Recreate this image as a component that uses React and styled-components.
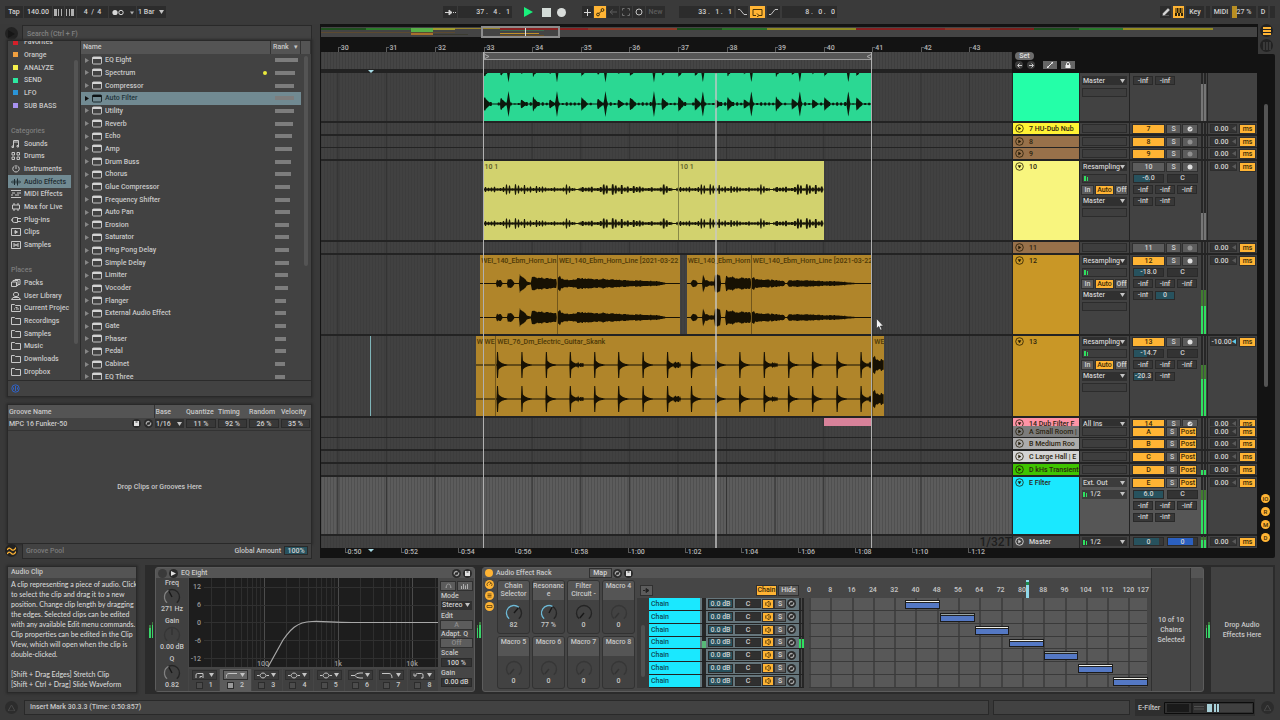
import React from 'react';
import styled, { createGlobalStyle } from 'styled-components';

const GlobalStyle = createGlobalStyle`
  * {
    box-sizing: border-box;
  }
  body {
    margin: 0;
    background: #393939;
    color: #c8c8c8;
    font-family: Roboto, "Liberation Sans", sans-serif;
    font-size: 7px;
    font-weight: 500;
    line-height: 10px;
  }
  button, input, select {
    font: inherit;
    color: inherit;
    margin: 0;
    padding: 0;
    border: 0;
    border-radius: 0;
    background: none;
  }
  svg {
    display: block;
  }
`;

const ORANGE = '#ffb434';
const FIRST_BAR = 29.654;
const BAR_SPAN = 14.221;

const barPos = (bar) => `${((bar - FIRST_BAR) / BAR_SPAN) * 100}%`;
const barWidth = (bars) => `${(bars / BAR_SPAN) * 100}%`;

/* ---------- page ---------- */

const Page = styled.div`
  display: grid;
  grid-template-rows: 24px minmax(534px, 1fr) 137px 25px;
  grid-template-columns: minmax(0, 1fr);
  min-height: 100vh;
`;

const Main = styled.main`
  display: grid;
  grid-template-columns: 311px minmax(0, 1fr) 17px;
  padding-right: 5px;
`;

/* ---------- transport ---------- */

const TransportBar = styled.header`
  display: grid;
  grid-template-columns: 1fr auto 1fr;
  align-items: center;
  padding: 0 5px;
  background: #3a3a3a;
`;

const Cluster = styled.div`
  display: flex;
  align-items: center;
  justify-content: ${(props) => props.$end ? 'flex-end' : 'flex-start'};
  gap: ${(props) => props.$gap || 2}px;
`;

const BarButton = styled.button`
  display: flex;
  align-items: center;
  justify-content: center;
  gap: 3px;
  width: ${(props) => props.$w}px;
  height: 12px;
  background: ${(props) => props.$on ? ORANGE : props.$bare ? 'transparent' : '#2c2c2c'};
  color: ${(props) => props.$on ? '#222' : props.$dim ? '#5c5c5c' : '#d0d0d0'};
`;

const BarField = styled.input`
  width: ${(props) => props.$w}px;
  height: 12px;
  background: #2c2c2c;
  color: #d0d0d0;
  text-align: ${(props) => props.$align || 'center'};
  padding: 0 2px;
`;

const LoadField = styled.output`
  display: flex;
  align-items: center;
  justify-content: center;
  width: 24px;
  height: 12px;
  background: linear-gradient(90deg, #b98f22 5px, #2c2c2c 5px);
`;

const SelectWrap = styled.span`
  position: relative;
  display: block;
  width: ${(props) => props.$w ? `${props.$w}px` : '100%'};
  height: ${(props) => props.$h || 9}px;
  background: ${(props) => props.$bg || '#303030'};

  select {
    display: block;
    width: 100%;
    height: 100%;
    padding: 0 6px 0 ${(props) => props.$ticks ? 8 : 1}px;
    appearance: none;
    line-height: 8px;
    color: #d0d0d0;
  }
  svg {
    position: absolute;
    right: 2px;
    top: calc(50% - 2px);
    pointer-events: none;
  }
  svg + svg {
    right: auto;
    left: 1px;
  }
`;

const LevelTicks = () => (
  <svg width="5" height="5"><path d="M0 0h2v5H0zM3 1h1v4H3z" fill="#2fe060" /></svg>
);

const Select = ({ label, value, w, h, bg, ticks }) => (
  <SelectWrap $w={w} $h={h} $bg={bg} $ticks={ticks}>
    <select aria-label={label} defaultValue={value}>
      <option>{value}</option>
    </select>
    <svg width="5" height="4"><path d="M0 0h5L2.5 4z" fill="#c4c4c4" /></svg>
    {ticks && <LevelTicks />}
  </SelectWrap>
);

const Transport = () => (
  <TransportBar>
    <Cluster $gap={1}>
      <BarButton $w={18}>Tap</BarButton>
      <BarField $w={28} aria-label="Tempo" defaultValue="140.00" />
      <BarButton $w={11} aria-label="Nudge down">
        <svg width="9" height="7" fill="#b0b0b0"><path d="M0 0h3v7H0zM4 0h1v7H4zM7 0h1v7H7z" /></svg>
      </BarButton>
      <BarButton $w={11} aria-label="Nudge up">
        <svg width="9" height="7" fill="#b0b0b0"><path d="M0 0h1v7H0zM3 0h1v7H3zM5 0h3v7H5z" /></svg>
      </BarButton>
      <BarField $w={31} aria-label="Time signature" defaultValue="4  /  4" />
      <BarButton $w={27} aria-label="Metronome">
        <svg width="22" height="7">
          <circle cx="3" cy="3.5" r="2.6" fill="#d8d8d8" />
          <circle cx="9" cy="3.5" r="2.2" fill="none" stroke="#d8d8d8" />
          <path d="M18 2.5h4l-2 3z" fill="#b0b0b0" />
        </svg>
      </BarButton>
      <Select label="Quantization" value="1 Bar" w={29} h={12} bg="#2c2c2c" />
    </Cluster>
    <Cluster $gap={14}>
      <Cluster $gap={6}>
        <Cluster $gap={1}>
          <BarButton $w={14} aria-label="Follow">
            <svg width="11" height="7"><path d="M0 3.5h7M4 1l3 2.5L4 6zM8 3.5h1M10 3.5h1" stroke="#d0d0d0" fill="#d0d0d0" /></svg>
          </BarButton>
          <BarField $w={54} $align="right" aria-label="Arrangement position" defaultValue="37 .   4 .   1" />
        </Cluster>
        <Cluster>
          <BarButton $w={20} $bare aria-label="Play">
            <svg width="9" height="10"><path d="M0 0l9 5-9 5z" fill="#19f07c" /></svg>
          </BarButton>
          <BarButton $w={12} $bare aria-label="Stop">
            <svg width="9" height="9"><path d="M0 0h9v9H0z" fill="#d4dcd8" /></svg>
          </BarButton>
          <BarButton $w={14} $bare aria-label="Record">
            <svg width="9" height="9"><circle cx="4.5" cy="4.5" r="4.5" fill="#d8dcda" /></svg>
          </BarButton>
        </Cluster>
      </Cluster>
      <Cluster $gap={1}>
        <BarButton $w={11} aria-label="Overdub">
          <svg width="7" height="7"><path d="M3.5 0v7M0 3.5h7" stroke="#d8d8d8" /></svg>
        </BarButton>
        <BarButton $w={12} $on aria-label="Automation arm">
          <svg width="9" height="9" fill="none" stroke="#3a2c0c">
            <circle cx="2" cy="6.5" r="1.4" /><circle cx="6.5" cy="2" r="1.4" /><path d="M3 5.5L5.5 3" />
          </svg>
        </BarButton>
        <BarButton $w={12} aria-label="Re-enable automation">
          <svg width="8" height="6"><path d="M8 3H2M4 .5L1 3l3 2.5" stroke="#5c5c5c" fill="none" /></svg>
        </BarButton>
        <BarButton $w={12} aria-label="Capture">
          <svg width="8" height="8"><path d="M.5 2.5V.5h2M5.5.5h2v2M7.5 5.5v2h-2M2.5 7.5H.5v-2" stroke="#707070" fill="none" /></svg>
        </BarButton>
        <BarButton $w={12} aria-label="Session record">
          <svg width="8" height="8"><circle cx="4" cy="4" r="3" fill="none" stroke="#c4c4c4" /></svg>
        </BarButton>
        <BarButton $w={19} $dim>New</BarButton>
      </Cluster>
      <Cluster>
        <BarField $w={55} $align="right" aria-label="Loop start" defaultValue="33 .   1 .   1" />
        <BarButton $w={12} aria-label="Punch in">
          <svg width="9" height="6"><path d="M0 .5h2l4 5h3" stroke="#c4c4c4" fill="none" /></svg>
        </BarButton>
        <BarButton $w={15} $on aria-label="Loop">
          <svg width="11" height="9"><path d="M4 7.5H1v-6h9v6H7M5 5.5L7 7.5 5 9" stroke="#4a3406" fill="none" /></svg>
        </BarButton>
        <BarButton $w={13} aria-label="Punch out">
          <svg width="9" height="6"><path d="M0 5.5h2l4-5h3" stroke="#c4c4c4" fill="none" /></svg>
        </BarButton>
        <BarField $w={55} $align="right" aria-label="Loop length" defaultValue="8 .   0 .   0" />
      </Cluster>
    </Cluster>
    <Cluster $end>
      <BarButton $w={11} aria-label="Draw mode">
        <svg width="8" height="8"><path d="M1 5.5L6 .5l1.5 1.5-5 5H1zM0 8h7" fill="#d8d8d8" stroke="#d8d8d8" strokeWidth=".5" /></svg>
      </BarButton>
      <BarButton $w={11} $on aria-label="Computer MIDI keyboard">
        <svg width="8" height="8"><path d="M0 0h8v8H0z" fill="#2b2208" /><path d="M2.5 5v3M5.5 5v3M1 0v5M4 0v5M7 0v5" stroke={ORANGE} /></svg>
      </BarButton>
      <BarButton $w={18}>Key</BarButton>
      <BarButton $w={4} aria-label="Key in" />
      <BarButton $w={18}>MIDI</BarButton>
      <LoadField>27 %</LoadField>
      <BarButton $w={10}>D</BarButton>
      <BarButton $w={5} aria-label="MIDI out" />
    </Cluster>
  </TransportBar>
);

/* ---------- browser ---------- */

const LeftColumn = styled.div`
  display: flex;
  flex-direction: column;
  gap: 9px;
  padding: 2px 0 0 5px;
`;

const CornerRow = styled.div`
  display: flex;
  align-items: center;
  gap: 5px;
  height: 15px;
`;

const RoundButton = styled.button`
  display: flex;
  align-items: center;
  justify-content: center;
  flex: none;
  width: ${(props) => props.$size || 15}px;
  height: ${(props) => props.$size || 15}px;
  border-radius: 50%;
  background: ${(props) => props.$bg || '#222'};
  color: ${(props) => props.$fg || '#c8c8c8'};
  font-size: 6px;
`;

const SearchInput = styled.input`
  flex: 1;
  height: 15px;
  padding-left: 4px;
  background: #424242;
  box-shadow: 0 0 0 1px #292929;

  &::placeholder {
    color: #808080;
    opacity: 1;
  }
`;

const BrowserBox = styled.section`
  flex: 1;
  display: flex;
  flex-direction: column;
`;

const BrowserPanel = styled.div`
  flex: 1;
  display: grid;
  grid-template-columns: 73px minmax(0, 1fr);
  grid-template-rows: minmax(0, 1fr) 15px;
  row-gap: 1px;
  margin-left: 3px;
  background: #2b2b2b;
  box-shadow: 0 0 0 1px #292929, 0 0 2px 2px #2d2d2d;
`;

const Sidebar = styled.nav`
  position: relative;
  overflow: hidden;
  background: #424242;
  margin-right: 1px;
`;

const SidebarList = styled.ul`
  display: grid;
  grid-template-rows: repeat(27, 1fr);
  height: calc(100% + 3px);
  margin: -5px 9px 0 0;
  padding: 0;
  list-style: none;
`;

const SidebarItem = styled.li`
  display: flex;
  align-items: center;
  gap: 3px;
  padding-left: ${(props) => props.$swatch ? 5 : 3}px;
  white-space: nowrap;
  overflow: hidden;
  background: ${(props) => props.$active ? '#718a92' : 'none'};
  color: ${(props) => props.$heading ? '#7c7c7c' : props.$active ? '#1f2c31' : '#c8c8c8'};

  a {
    color: inherit;
    text-decoration: none;
  }
`;

const Swatch = styled.span`
  width: 5px;
  height: 5px;
  margin-right: 3px;
  background: ${(props) => props.$color};
`;

const Thumb = styled.div`
  position: absolute;
  right: ${(props) => props.$right}px;
  top: ${(props) => props.$top}%;
  height: ${(props) => props.$size}%;
  width: 4px;
  border-radius: 2px;
  background: #545454;
`;

const ICONS = {
  sounds: <path d="M2.5 6.5v-6h5v5.5M2.5 2h5M1 6h1.5v1.5H1zM6 5.5h1.5V7H6z" />,
  drums: <path d="M1 .5h2.5V3H1zM6 .5h2.5V3H6zM1 5h2.5v2.5H1zM6 5h2.5v2.5H6z" />,
  instruments: <path d="M3.5 1a3.2 3.2 0 1 0 3 0M5 0v4" />,
  audio: <path d="M.5 3.5v1M2 2.5v3M3.5 1v6M5 2.5v3M6.5.5v7M8 2.5v3M9.5 3.5v1" />,
  midi: <path d="M0 .5h10M0 7.5h10M1 3h3M6 3h4M0 5h2M4 5h4" />,
  max: <path d="M1.5 2h7v4h-7zM3 0v2M7 0v2M3 6v2M7 6v2" />,
  plugins: <path d="M0 4h2M3.5 1.5h3v5h-3a2.5 2.5 0 0 1 0-5M6.5 2.5H10M6.5 5.5H10" />,
  clips: <><path d="M.5.5h9v7h-9z" /><path d="M4 2.5L6.5 4 4 5.5z" fill="currentColor" /></>,
  samples: <path d="M.5.5h9v7h-9zM3 2v4M4.5 3.5v1M5.5 3.5v1M7 2v4M3 4h4" />,
  packs: <path d="M.5 3h5v4.5h-5zM2 3V1.5h5v5H5.5M4 1.5V.5h5v5H7" />,
  user: <path d="M.5 7.5h9L8 5.5H2zM5 .5a2 2 0 0 1 1 4H4a2 2 0 0 1 1-4" />,
  project: <><path d="M.5 7.5v-7h3l1 1h5v6z" /><path d="M3 5h1M5 5h3M4.5 3.5h2" /></>,
  folder: <path d="M.5 7.5v-7h3l1 1h5v6z" />,
};

const SIDEBAR = [
  { text: 'Favorites', swatch: '#d4202a' },
  { text: 'Orange', swatch: '#f0a040' },
  { text: 'ANALYZE', swatch: '#f6f04c' },
  { text: 'SEND', swatch: '#2de8a0' },
  { text: 'LFO', swatch: '#2a94d8' },
  { text: 'SUB BASS', swatch: '#a892f0' },
  {},
  { text: 'Categories', heading: true },
  { text: 'Sounds', icon: 'sounds' },
  { text: 'Drums', icon: 'drums' },
  { text: 'Instruments', icon: 'instruments' },
  { text: 'Audio Effects', icon: 'audio', active: true },
  { text: 'MIDI Effects', icon: 'midi' },
  { text: 'Max for Live', icon: 'max' },
  { text: 'Plug-ins', icon: 'plugins' },
  { text: 'Clips', icon: 'clips' },
  { text: 'Samples', icon: 'samples' },
  {},
  { text: 'Places', heading: true },
  { text: 'Packs', icon: 'packs' },
  { text: 'User Library', icon: 'user' },
  { text: 'Current Projec', icon: 'project' },
  { text: 'Recordings', icon: 'folder' },
  { text: 'Samples', icon: 'folder' },
  { text: 'Music', icon: 'folder' },
  { text: 'Downloads', icon: 'folder' },
  { text: 'Dropbox', icon: 'folder' },
];

const DEVICES = [
  ['EQ Eight', 23], ['Spectrum', 20], ['Compressor', 19], ['Auto Filter', 19], ['Utility', 19],
  ['Reverb', 18], ['Echo', 17], ['Amp', 17], ['Drum Buss', 16], ['Chorus', 16],
  ['Glue Compressor', 15], ['Frequency Shifter', 15], ['Auto Pan', 15], ['Erosion', 14],
  ['Saturator', 14], ['Ping Pong Delay', 14], ['Simple Delay', 14], ['Limiter', 13],
  ['Vocoder', 13], ['Flanger', 11], ['External Audio Effect', 11], ['Gate', 11],
  ['Phaser', 11], ['Pedal', 11], ['Cabinet', 10], ['EQ Three', 10],
];

const DeviceTable = styled.table`
  position: relative;
  display: flex;
  flex-direction: column;
  overflow: hidden;
  background: #424242;

  tr {
    display: grid;
    grid-template-columns: minmax(0, 1fr) 30px 10px;
  }
  th {
    padding: 0 2px;
    text-align: left;
    font-weight: 500;
    line-height: 13px;
    background: #545454;
    border-right: 1px solid #333;
  }
  tbody {
    flex: 1;
    display: grid;
    grid-template-rows: repeat(26, 1fr);
    margin-bottom: -3px;
  }
`;

const DeviceRow = styled.tr`
  color: ${(props) => props.$active ? '#22343b' : '#c8c8c8'};

  td {
    display: flex;
    align-items: center;
    gap: 3px;
    padding: 0 0 0 4px;
    background: ${(props) => props.$active ? '#718a92' : 'none'};
  }
  td:last-child {
    background: none;
  }
`;

const Favorite = styled.span`
  width: 4px;
  height: 4px;
  margin: 0 4px 0 auto;
  border-radius: 50%;
  background: #eaea3c;
`;

const RankBar = styled.span`
  height: 4px;
  background: #7d7d7d;
`;

const BrowserFooter = styled.div`
  grid-column: 1 / -1;
  display: flex;
  align-items: center;
  padding-left: 3px;
  background: #424242;
`;

const Browser = () => (
  <BrowserBox>
    <CornerRow>
      <RoundButton $size={13} aria-label="Hide browser">
        <svg width="7" height="8"><path d="M0 0l7 4-7 4z" fill="#161616" /></svg>
      </RoundButton>
      <SearchInput type="search" aria-label="Search" placeholder="Search (Ctrl + F)" />
    </CornerRow>
    <BrowserPanel>
      <Sidebar>
        <SidebarList>
          {SIDEBAR.map((item, i) => (
            <SidebarItem key={i} $swatch={item.swatch} $active={item.active} $heading={item.heading}>
              {item.swatch && <Swatch $color={item.swatch} />}
              {item.icon &&
                <svg width="10" height="8" viewBox="0 0 10 8" fill="none" stroke="currentColor">{ICONS[item.icon]}</svg>
              }
              {item.heading ? item.text : item.text && <a href={`#${item.text}`}>{item.text}</a>}
            </SidebarItem>
          ))}
        </SidebarList>
        <Thumb $right={2} $top={5.5} $size={84} />
      </Sidebar>
      <DeviceTable>
        <thead>
          <tr>
            <th>Name</th>
            <th>Rank &nbsp; ▾</th>
            <th aria-label="Scroll" />
          </tr>
        </thead>
        <tbody>
          {DEVICES.map(([name, rank], i) => (
            <DeviceRow key={name} $active={i === 3}>
              <td>
                <svg width="4" height="5"><path d="M0 0l4 2.5L0 5z" fill={i === 3 ? '#111' : '#868686'} /></svg>
                <svg width="10" height="9">
                  <rect x=".5" y="1" width="9" height="7" rx="1" fill="none" stroke={i === 3 ? '#1c282c' : '#c4c4c4'} />
                  <path d="M.5 1h9v2h-9z" fill={i === 3 ? '#0c1214' : '#d4d4d4'} />
                </svg>
                {name}
                {i === 1 && <Favorite />}
              </td>
              <td><RankBar style={{ width: rank }} /></td>
              <td />
            </DeviceRow>
          ))}
        </tbody>
        <Thumb as="caption" $right={3} $top={4.5} $size={62} />
      </DeviceTable>
      <BrowserFooter>
        <svg width="9" height="9" fill="none" stroke="#2f62c8">
          <circle cx="4.5" cy="4.5" r="3.7" /><path d="M4.5 2v5M2.5 3.5v2M6.5 3.5v2" />
        </svg>
      </BrowserFooter>
    </BrowserPanel>
  </BrowserBox>
);

/* ---------- groove pool ---------- */

const GrooveBox = styled.section`
  display: flex;
  flex-direction: column;
  height: 153px;
`;

const GroovePanel = styled.div`
  flex: 1;
  display: flex;
  flex-direction: column;
  margin-left: 3px;
  background: #424242;
  box-shadow: 0 0 0 1px #292929, 0 0 2px 2px #2d2d2d;
`;

const GrooveTable = styled.table`
  width: 100%;
  table-layout: fixed;
  border-collapse: collapse;
  border-bottom: 1px solid #333;

  th, td {
    height: 12px;
    padding: 0 1px;
    text-align: left;
    font-weight: 500;
  }
  th {
    height: 13px;
    background: #545454;
  }
  th:nth-child(2) {
    border-left: 1px solid #333;
  }
`;

const GrooveName = styled.div`
  display: flex;
  align-items: center;
  gap: 3px;

  span {
    flex: 1;
  }
`;

const DropHint = styled.p`
  flex: 1;
  display: flex;
  align-items: center;
  justify-content: center;
  margin: 0;
  text-align: center;
`;

const GrooveFooter = styled.div`
  flex: 1;
  display: flex;
  align-items: center;
  height: 14px;
  padding: 0 3px;
  color: #7c7c7c;
  background: #424242;
  box-shadow: 0 0 0 1px #292929;

  label {
    margin: 0 3px 0 auto;
    color: #c8c8c8;
  }
`;

const Field = styled.input`
  display: block;
  width: ${(props) => props.$w ? `${props.$w}px` : '100%'};
  min-width: 0;
  height: ${(props) => props.$h || 9}px;
  text-align: center;
  line-height: 8px;
  color: ${(props) => props.$fg || '#d0d0d0'};
  border: 1px solid #2a2a2a;
  background: linear-gradient(90deg, ${(props) => props.$fillColor || '#27525e'} ${(props) => props.$fill || 0}%, ${(props) => props.$bg || '#383838'} 0);
`;

const SwapIcon = () => (
  <svg width="9" height="9">
    <circle cx="4.5" cy="4.5" r="4.5" fill="#2a2a2a" />
    <path d="M2.5 5.5a2 2 0 0 1 3-2.5M6.5 3.5a2 2 0 0 1-3 2.5" stroke="#a8a8a8" fill="none" strokeWidth="1.3" />
  </svg>
);

const SaveIcon = () => (
  <svg width="9" height="9">
    <circle cx="4.5" cy="4.5" r="4.5" fill="#2a2a2a" />
    <path d="M2 2h5v5H2z" fill="#e0e0e0" /><path d="M3.5 2.5h2v1h-2z" fill="#333" />
  </svg>
);

const GROOVE_FIELDS = [['Quantize', '11 %'], ['Timing', '92 %'], ['Random', '26 %'], ['Velocity', '35 %']];

const GroovePool = () => (
  <GrooveBox>
    <GroovePanel>
      <GrooveTable>
        <colgroup>
          <col /><col width="31" /><col width="32" /><col width="31" /><col width="32" /><col width="31" />
        </colgroup>
        <thead>
          <tr>
            <th>Groove Name</th>
            <th>Base</th>
            {GROOVE_FIELDS.map(([name]) => <th key={name}>{name}</th>)}
          </tr>
        </thead>
        <tbody>
          <tr>
            <td>
              <GrooveName><span>MPC 16 Funker-50</span><SaveIcon /><SwapIcon /></GrooveName>
            </td>
            <td><Select label="Base" value="1/16" /></td>
            {GROOVE_FIELDS.map(([name, value]) => (
              <td key={name}><Field aria-label={name} defaultValue={value} /></td>
            ))}
          </tr>
        </tbody>
      </GrooveTable>
      <DropHint>Drop Clips or Grooves Here</DropHint>
    </GroovePanel>
    <CornerRow>
      <RoundButton $size={13} aria-label="Groove pool">
        <svg width="9" height="8" fill="none" stroke={ORANGE} strokeWidth="1.3">
          <path d="M0 3c2-3 3-2 4.5-.5S7.5 3 9 .5M0 7c2-3 3-2 4.5-.5S7.5 7 9 4.5" />
        </svg>
      </RoundButton>
      <GrooveFooter>
        Groove Pool
        <label htmlFor="global-amount">Global Amount</label>
        <Field id="global-amount" $w={24} $fill={100} defaultValue="100%" />
      </GrooveFooter>
    </CornerRow>
  </GrooveBox>
);

/* ---------- arrangement ---------- */

const Arrangement = styled.section`
  display: flex;
  flex-direction: column;
  min-width: 0;
  margin-left: 9px;
  padding: 2px 1px 0;
  background: #131313;
`;

const Overview = styled.div`
  position: relative;
  height: 12px;
  border: solid #131313;
  border-width: 1px 0;
  background: #444;

  svg {
    width: 100%;
    height: 10px;
  }
`;

const OverviewFrame = styled.div`
  position: absolute;
  left: 17.1%;
  width: 8.4%;
  top: -1px;
  height: 12px;
  border: 2px solid #8c8c8c;
`;

const OVERVIEW_LINES = [
  [321, 366, 1, 2, '#1f4f1e'], [366, 411, 1, 2, '#2c7c2a'], [411, 433, 1, 4, '#58b048'], [433, 455, 1, 2, '#a09c2c'],
  [455, 500, 1, 1, '#98832a'], [500, 588, 1, 2, '#8a2020'], [588, 677, 1, 2, '#8c3a28'], [677, 722, 1, 2, '#1c4e1c'],
  [722, 767, 1, 2, '#2a7228'], [767, 856, 1, 2, '#8f8a24'], [856, 945, 1, 2, '#862020'], [945, 990, 1, 2, '#8a3828'],
  [990, 1034, 1, 2, '#7a201c'], [1034, 1079, 1, 2, '#1c4e1c'], [1079, 1123, 1, 2, '#2a7a2c'], [1123, 1213, 1, 2, '#948c22'],
  [321, 455, 5, 1, '#5c4a30'], [411, 433, 6, 2, '#a8702c'], [433, 468, 7, 1, '#3a3a30'], [500, 544, 3, 1, '#3c6a50'],
  [500, 539, 6, 1, '#c09028'], [500, 544, 8, 1, '#6a4c22'], [500, 539, 9, 1, '#3f5c80'],
];

const WithSide = styled.div`
  display: grid;
  grid-template-columns: minmax(0, 1fr) 245px;
  position: relative;
`;

const Ruler = styled.div`
  position: relative;
  height: ${(props) => props.$h}px;
  overflow: hidden;
`;

const RulerLabel = styled.span`
  position: absolute;
  left: ${(props) => props.$left};
  ${(props) => props.$low ? 'top: 0;' : 'bottom: 0;'}
  padding-left: 3px;
  color: #b4b4b4;
  line-height: ${(props) => props.$low ? 9 : 7}px;

  &::before {
    content: '';
    position: absolute;
    left: 0;
    ${(props) => props.$low ? 'top: 0;' : 'bottom: 0;'}
    width: 2px;
    height: 4px;
    border-left: 1px solid #5c5c5c;
    ${(props) => props.$low ? 'border-bottom: 1px solid #5c5c5c;' : 'border-top: 1px solid #5c5c5c;'}
  }
`;

const ScrubLane = styled.div`
  position: relative;
  height: 21px;
  border-bottom: 4px solid #222;
  background: repeating-linear-gradient(90deg, #3e3e3e 0 1px, #454545 1px 3px);
`;

const LoopBrace = styled.div`
  position: absolute;
  left: ${(props) => props.$left};
  width: ${(props) => props.$width};
  top: 0;
  height: 8px;
  display: flex;
  justify-content: space-between;
  align-items: center;
  border: 1px solid #9a9a9a;
  background: #575757;
`;

const InsertMark = styled.span`
  position: absolute;
  left: ${(props) => props.$left};
  ${(props) => props.$low ? 'top: 1px;' : 'bottom: -4px;'}
  margin-left: -3px;
  border: solid transparent;
  border-width: 3px 3px 0;
  border-top-color: #a8dce6;
`;

const SetPanel = styled.div`
  display: flex;
  flex-wrap: wrap;
  align-content: flex-start;
  gap: 1px 4px;
  width: 80px;
  padding: 0 3px;

  span {
    flex: 0 0 100%;
  }
`;

const SetButton = styled.button`
  display: block;
  width: 19px;
  height: 8px;
  border-radius: 4px;
  background: #6c6c6c;
  color: #e0e0e0;
  line-height: 8px;
`;

const TinyButton = styled.button`
  display: flex;
  align-items: center;
  justify-content: center;
  width: ${(props) => props.$round ? 8 : 14}px;
  height: 8px;
  border-radius: ${(props) => props.$round ? 4 : 0}px;
  background: ${(props) => props.$round ? '#3c3c3c' : '#666'};
  color: #d8d8d8;
`;

const Tracks = styled.div`
  flex: 1;
  display: flex;
  flex-direction: column;
  position: relative;
  background: #232323;
`;

const TrackRow = styled.div`
  display: grid;
  grid-template-columns: minmax(0, 1fr) 66px 49px 77px 49px;
  column-gap: 1px;
  flex: ${(props) => props.$grow ? 1 : 'none'};
  height: ${(props) => props.$h}px;
  padding-bottom: ${(props) => props.$last ? 0 : 2}px;
  overflow: hidden;
`;

const Lane = styled.div`
  position: relative;
  overflow: hidden;
  background: ${(props) => props.$selected
    ? 'repeating-linear-gradient(90deg, #505050 0 1px, #5c5c5c 1px 3px)'
    : 'repeating-linear-gradient(90deg, #3d3d3d 0 1px, #414141 1px 3px)'};
`;

const BarLines = styled.svg`
  position: absolute;
  inset: 0;
  width: 100%;
  height: 100%;
`;

const ClipBox = styled.div`
  position: absolute;
  left: ${(props) => props.$left};
  width: ${(props) => props.$width};
  top: 0;
  bottom: 0;
  overflow: hidden;
  background: ${(props) => props.$color};
  color: ${(props) => props.$ink};
  border-left: ${(props) => props.$joined ? '1px solid rgba(0, 0, 0, 0.35)' : 'none'};
  white-space: nowrap;

  span {
    position: relative;
    display: block;
    padding-left: 1px;
    line-height: 12px;
  }
  svg {
    position: absolute;
    left: 0;
    top: 0;
    width: 100%;
    height: 100%;
  }
`;

const Overlay = styled.div`
  position: absolute;
  inset: 0 245px 0 0;
  pointer-events: none;
`;

const VLine = styled.div`
  position: absolute;
  left: ${(props) => props.$left};
  top: ${(props) => props.$top || 0}px;
  bottom: ${(props) => props.$bottom || 0}px;
  width: ${(props) => props.$w || 1}px;
  margin-left: -1px;
  background: ${(props) => props.$color || '#b0b0b0'};
`;

const Cursor = styled.svg`
  position: absolute;
  left: ${(props) => props.$left};
  top: 245px;
`;

const ZoomLabel = styled.span`
  position: absolute;
  right: 0;
  bottom: 0;
  font-size: 12px;
  line-height: 12px;
  color: #1e1e1e;
`;

const noise = (n) => {
  const v = Math.sin(n * 12.9898) * 43758.5453;
  return v - Math.floor(v);
};

// filled outline of an amplitude function around one centre line
const outline = (width, centre, amp) => {
  const top = [];
  const bottom = [];
  for (let x = 0; x <= width; x += 0.5) {
    const a = Math.max(0.5, amp(x));
    top.push(`${x} ${(centre - a).toFixed(1)}`);
    bottom.unshift(`${x} ${(centre + a).toFixed(1)}`);
  }
  return `M${top.join('L')}L${bottom.join('L')}Z`;
};

const HITS = [
  [0, 8], [16.5, 7], [24.5, 13], [37, 5], [48.6, 8], [65.5, 5], [73, 13], [97.2, 8], [113.5, 6],
  [121.5, 13], [134, 5], [145.8, 8], [170, 13], [178, 7],
];

const drumAmp = (x) => {
  const t = x % 194.4;
  let a = 0.5 + (Math.floor(t / 2) % 2 ? noise(Math.floor(t / 4)) * 1.6 : 0);
  HITS.forEach(([at, size]) => {
    const d = t - at;
    if (size > 10 && Math.abs(d) < 2) a = Math.max(a, size * (1 - Math.abs(d) / 2));
    else if (size < 10 && d >= 0 && d < 7) a = Math.max(a, size * (1 - d / 7) * (0.8 + 0.2 * noise(d)));
  });
  return a;
};

const shakerAmp = (x) => {
  const t = x % 97.2;
  if (t > 91 && t < 95) return 0.6;
  const step = Math.floor(t / 3);
  const d = Math.abs((t % 3) - 1.5);
  return d < 1 ? 1.2 + noise(step + 3) ** 2 * 4 : 0.9;
};

const envelopeAmp = (points) => (x) => {
  for (let i = 1; i < points.length; i += 1) {
    const [x0, a0] = points[i - 1];
    const [x1, a1] = points[i];
    if (x >= x0 && x < x1) {
      const a = a0 + ((a1 - a0) * (x - x0)) / (x1 - x0);
      return a * (0.82 + 0.3 * noise(Math.floor(x / 1.5)));
    }
  }
  return 0.5;
};

const HORN_A = envelopeAmp([
  [16, 0], [17, 3.5], [21, 3], [23, 0], [27, 0], [28, 4.5], [32, 4], [35, 0], [39, 0], [40, 10], [43, 7], [47, 2],
  [51, 1], [52, 7], [56, 5.5], [77, 5],
]);
const HORN_B = envelopeAmp([
  [0, 8], [3, 6], [6, 4], [17, 3.5], [19, 5], [45, 4.5], [60, 3.5], [80, 3], [100, 2.5], [112, 0],
]);
const HORN_C = envelopeAmp([
  [3, 0], [6, 4], [9, 3], [11, 0], [15, 0], [16, 8], [18, 4], [22, 2], [27, 2], [28, 9], [33, 8], [34, 0], [38, 0],
  [39, 8], [48, 5.5], [64, 5],
]);
const HORN_D = envelopeAmp([
  [0, 7], [3, 5], [8, 4], [20, 3.5], [32, 2.5], [34, 0], [35, 0], [37, 3.5], [60, 2.8], [90, 2], [110, 0],
]);

const skankAmp = (x) => {
  const n = Math.floor((x - 1) / 24.3);
  const d = x - 1 - n * 24.3;
  if (n < 0) return 0.4;
  if (d < 1.5) return 13;
  if (n % 4 === 3 && d > 7 && d < 14) return 1 + noise(x) * 2.5;
  return 7 * Math.exp(-d / 3.5) + 0.3;
};
const tailAmp = envelopeAmp([[0, 10], [4, 6], [8, 4], [9, 6], [13, 5]]);
const silence = () => 0.4;

const Wave = ({ width, height, centres, amp }) => (
  <svg viewBox={`0 0 ${width} ${height}`} preserveAspectRatio="none">
    {centres.map((centre) => <path key={centre} d={outline(width, centre, amp)} fill="rgba(10, 8, 0, 0.92)" />)}
  </svg>
);

const GREEN = { color: '#2bd893', ink: '#0c3a28' };
const YELLOW = { color: '#d2d26e', ink: '#5a5a26' };
const GOLD = { color: '#b0852a', ink: '#4c3808' };

const TRACKS = [
  {
    h: 50, color: '#24ffa8', sends: ['-inf', '-inf'], cut: true, meter: [0.78, 0], meterColor: '#767676',
    clips: [
      { from: 33, to: 41, tint: GREEN, wave: { width: 388.8, centres: [-3.5, 31], amp: drumAmp } },
    ],
  },
  { h: 13, name: '7 HU-Dub Nub', color: '#fff234', on: true, arm: 'drum', delay: '0.00' },
  { h: 12, name: '8', color: '#98714a', on: true, arm: 'off', delay: '0.00' },
  { h: 13, name: '9', color: '#98714a', on: true, arm: 'off', delay: '0.00' },
  {
    h: 81, name: '10', color: '#f8f57e', open: true, arm: 'on', delay: '0.00', vol: '-6.0', fill: 55,
    input: 'Resampling', sends: ['-inf', '-inf', '-inf', '-inf', '-inf'], meter: [0.34, 0], meterColor: '#767676',
    clips: [
      { from: 33, to: 37, text: '10 1', tint: YELLOW, wave: { width: 194.4, centres: [28.5, 62.5], amp: shakerAmp } },
      { from: 37, to: 40, text: '10 1', joined: true, tint: YELLOW, wave: { width: 145.8, centres: [28.5, 62.5], amp: shakerAmp } },
    ],
  },
  { h: 13, name: '11', color: '#98714a', arm: 'off', delay: '0.00' },
  {
    h: 81, name: '12', color: '#c99726', open: true, on: true, arm: 'on', delay: '0.00', vol: '-18.0', fill: 34,
    input: 'Resampling', sends: ['-inf', '-inf', '-inf', '-inf', '0'], meter: [0.36, 0.56],
    clips: [
      { from: 32.93, to: 34.51, text: 'WEI_140_Ebm_Horn_Lin', tint: GOLD, wave: { width: 77, centres: [28.5, 62.5], amp: HORN_A } },
      { from: 34.51, to: 37.04, text: 'WEI_140_Ebm_Horn_Line [2021-03-22', joined: true, tint: GOLD, wave: { width: 123, centres: [28.5, 62.5], amp: HORN_B } },
      { from: 37.18, to: 38.5, text: 'WEI_140_Ebm_Horn', tint: GOLD, wave: { width: 64, centres: [28.5, 62.5], amp: HORN_C } },
      { from: 38.5, to: 40.99, text: 'WEI_140_Ebm_Horn_Line [2021-03-22', joined: true, tint: GOLD, wave: { width: 121, centres: [28.5, 62.5], amp: HORN_D } },
    ],
  },
  {
    h: 82, name: '13', color: '#c99726', open: true, on: true, arm: 'on', delay: '-10.00', vol: '-14.7', fill: 44,
    input: 'Resampling', sends: ['-inf', '-inf', '-inf', '-20.3', '-inf'], meter: [0.46, 0.64],
    clips: [
      { from: 32.84, to: 33, text: 'W', tint: GOLD, wave: { width: 8, centres: [29, 63], amp: silence } },
      { from: 33, to: 33.24, text: 'WE', tint: GOLD, wave: { width: 12, centres: [29, 63], amp: silence } },
      { from: 33.24, to: 41, text: 'WEI_76_Dm_Electric_Guitar_Skank', joined: true, tint: GOLD, wave: { width: 377, centres: [29, 63], amp: skankAmp } },
      { from: 41, to: 41.24, text: 'WE', joined: true, tint: GOLD, wave: { width: 12, centres: [29, 63], amp: tailAmp } },
    ],
  },
  {
    h: 8, name: '14 Dub Filter F', color: '#ff94a6', open: true, on: true, arm: 'drum', delay: '0.00', input: 'All Ins',
    clips: [{ from: 40, to: 41, tint: { color: '#d8829a' } }],
  },
  { h: 12, name: 'A Small Room |', color: '#7c7c7c', on: true, post: true, delay: '0.00' },
  { h: 13, name: 'B Medium Roo', color: '#acacac', on: true, post: true, delay: '0.00' },
  { h: 13, name: 'C Large Hall | E', color: '#d4d4d4', on: true, post: true, delay: '0.00' },
  { h: 13, name: 'D kHs Transient', color: '#3fc400', on: true, post: true, delay: '0.00', meter: [0.5, 0.5] },
  {
    h: 59, grow: true, name: 'E Filter', color: '#1ae8ff', open: true, on: true, post: true, delay: '0.00', vol: '6.0', fill: 100,
    input: 'Ext. Out', channel: '1/2', selected: true, sends: ['-inf', '-inf', '-inf', '-inf', '-inf'], meter: [0.6, 0.78],
  },
];

const TrackTitle = styled.div`
  display: flex;
  align-items: flex-start;
  gap: 5px;
  padding: 1px 2px 0;
  overflow: hidden;
  white-space: nowrap;
  background: ${(props) => props.$color};
  color: ${(props) => props.$light ? '#d8d8d8' : '#2c2410'};

  svg {
    flex: none;
  }
`;

const Cell = styled.div`
  display: grid;
  grid-auto-rows: 11px 12px;
  align-content: start;
  align-items: center;
  min-width: 0;
  padding: ${(props) => props.$cut ? 2 : 0}px 2px 0;
  background: ${(props) => props.$selected ? '#565656' : '#424242'};
`;

const MixerCell = styled.div`
  display: grid;
  grid-template-columns: minmax(0, 1fr) 5px;
  min-width: 0;
  padding: 0 1px 0 3px;
  background: ${(props) => props.$selected ? '#565656' : '#424242'};
`;

const Slots = styled.div`
  display: grid;
  grid-auto-rows: 11px 12px;
  align-content: start;
  align-items: center;
  padding-top: ${(props) => props.$cut ? 2 : 0}px;
`;

const MixLine = styled.div`
  display: grid;
  grid-template-columns: ${(props) => props.$cols};
  gap: ${(props) => props.$gap || 3}px;
`;

const MixButton = styled.button`
  display: flex;
  align-items: center;
  justify-content: center;
  height: 8px;
  padding: 0;
  background: ${(props) => props.$on ? ORANGE : '#5c5c5c'};
  color: ${(props) => props.$on ? '#3b2a08' : props.$dim ? '#8c8c8c' : '#d4d4d4'};
  box-shadow: 0 0 0 1px #303030;
  line-height: 8px;
`;

const MonitorLine = styled.div`
  display: grid;
  grid-template-columns: 11px 17px 11px;
  gap: 3px;
`;

const EmptyBox = styled.div`
  display: flex;
  align-items: flex-end;
  height: 9px;
  padding: 1px;
  border: 1px solid #2c2c2c;
  background: #3e3e3e;
`;

const DelayLine = styled.div`
  display: grid;
  grid-template-columns: minmax(0, 1fr) 15px;
  gap: 3px;
  align-items: center;
`;

const DelayField = styled.span`
  display: flex;
  align-items: center;
  height: 9px;
  border: 1px solid #2e2e2e;
  background: #343434;

  input {
    flex: 1;
    border: 0;
    height: 7px;
  }
  svg {
    flex: none;
  }
`;

const MeterPair = styled.div`
  align-self: stretch;
  display: flex;
  justify-content: space-between;
  background: #4a4a4a;

  i {
    width: 2px;
    background: linear-gradient(0deg, ${(props) => props.$color || '#2fe060'} ${(props) => props.$level * 100}%, #3f7c30 0, #3f7c30 ${(props) => props.$peak * 100}%, #262626 0);
  }
`;

const Meter = ({ level = 0, peak = 0, color }) => (
  <MeterPair $level={level} $peak={peak} $color={color}><i /><i /></MeterPair>
);

const FoldIcon = ({ open, light }) => (
  <svg width="9" height="9" fill="none" stroke={light ? '#ccc' : 'rgba(30, 22, 0, 0.75)'}>
    <circle cx="4.5" cy="4.5" r="3.8" />
    <path d={open ? 'M3 3.5h3L4.5 6z' : 'M3.5 3v3L6 4.5z'} fill={light ? '#ccc' : '#201800'} strokeWidth=".5" />
  </svg>
);

const ArmMark = ({ kind }) => (
  <svg width="6" height="6">
    <circle cx="3" cy="3" r="2.5" fill={kind === 'off' ? '#909090' : '#e0e0e0'} />
    {kind === 'drum' && <path d="M1.5 4.5L4.5 1.5V3z" fill="#555" />}
  </svg>
);

const Delay = ({ value, name }) => (
  <Cell>
    <DelayLine>
      <DelayField>
        <Field aria-label={`${name} track delay`} defaultValue={value} $bg="#343434" />
        <svg width="4" height="5"><path d="M4 0v5L0 2.5z" fill={value === '-10.00' ? '#5fc8e8' : '#5a5a5a'} /></svg>
      </DelayField>
      <MixButton $on>ms</MixButton>
    </DelayLine>
  </Cell>
);

const sendFill = { 0: 100, '-20.3': 50 };

const Track = ({ track }) => {
  const { name = '6', open, selected, cut, sends = [], meter = [0, 0] } = track;
  const full = sends.length === 5;
  return (
    <TrackRow $h={track.h} $grow={track.grow}>
      <Lane $selected={selected}>
        <BarLines>
          {BARS.map((bar) => (
            <line key={bar} x1={barPos(bar)} x2={barPos(bar)} y1="0" y2="100%" stroke="#333" />
          ))}
        </BarLines>
        {(track.clips || []).map((clip, i) => (
          <ClipBox
            key={i}
            $left={barPos(clip.from)}
            $width={barWidth(clip.to - clip.from)}
            $color={clip.tint.color}
            $ink={clip.tint.ink}
            $joined={clip.joined}
          >
            {clip.wave && <Wave height={track.h - 2} {...clip.wave} />}
            {clip.text && <span>{clip.text}</span>}
          </ClipBox>
        ))}
      </Lane>
      <TrackTitle $color={track.color}>
        {!cut && <FoldIcon open={open} />}
        {!cut && name}
      </TrackTitle>
      <Cell $cut={cut} $selected={selected}>
        {track.input && <Select label={`${name} input`} value={track.input} bg={selected ? '#3c3c3c' : undefined} />}
        {!track.input && !cut && <EmptyBox />}
        {track.channel && <Select label={`${name} channel`} value={track.channel} bg="#3c3c3c" ticks />}
        {full && !track.channel && (
          <>
            <EmptyBox><LevelTicks /></EmptyBox>
            <MonitorLine>
              <MixButton>In</MixButton>
              <MixButton $on>Auto</MixButton>
              <MixButton>Off</MixButton>
            </MonitorLine>
          </>
        )}
        {((full && !track.channel) || cut) && (
          <>
            <Select label={`${name} output`} value="Master" />
            <EmptyBox />
          </>
        )}
      </Cell>
      <MixerCell $selected={selected}>
        <Slots $cut={cut}>
          {!cut && (
            <MixLine $cols={track.post ? '31px 10px 16px' : '31px 13px 14px'}>
              <MixButton $on={track.on}>{name.split(' ')[0]}</MixButton>
              <MixButton>S</MixButton>
              {track.post
                ? <MixButton $on>Post</MixButton>
                : <MixButton aria-label={`Arm ${name}`}><ArmMark kind={track.arm} /></MixButton>
              }
            </MixLine>
          )}
          {full && (
            <MixLine $cols="31px 31px">
              <Field aria-label={`${name} volume`} defaultValue={track.vol} $fill={track.fill} $bg="#333" />
              <Field aria-label={`${name} pan`} defaultValue="C" $bg="#333" />
            </MixLine>
          )}
          {full && (
            <MixLine $cols="repeat(3, 20px)" $gap={2}>
              {sends.slice(0, 3).map((value, i) => (
                <Field key={i} aria-label={`${name} send ${i + 1}`} defaultValue={value} />
              ))}
            </MixLine>
          )}
          {sends.length > 0 && (
            <MixLine $cols="repeat(3, 20px)" $gap={2}>
              {sends.slice(-2).map((value, i) => (
                <Field key={i} aria-label={`${name} send ${i + 4}`} defaultValue={value} $fill={sendFill[value]} />
              ))}
            </MixLine>
          )}
        </Slots>
        <Meter level={meter[0]} peak={meter[1]} color={track.meterColor} />
      </MixerCell>
      {cut ? <Cell /> : <Delay value={track.delay} name={name} />}
    </TrackRow>
  );
};

const MasterTrack = () => (
  <TrackRow $h={12} $last>
    <Lane><ZoomLabel>1/32T</ZoomLabel></Lane>
    <TrackTitle $color="#424242" $light><FoldIcon light />Master</TrackTitle>
    <Cell><Select label="Master output" value="1/2" ticks /></Cell>
    <MixerCell>
      <Slots>
        <MixLine $cols="31px 31px">
          <Field aria-label="Master volume" defaultValue="0" $fill={85} />
          <Field aria-label="Cue volume" defaultValue="0" $fill={85} $fillColor="#2b60c0" />
        </MixLine>
      </Slots>
      <Meter level={0.7} peak={0.9} />
    </MixerCell>
    <Delay value="0.00" name="Master" />
  </TrackRow>
);

const BARS = [30, 31, 32, 33, 34, 35, 36, 37, 38, 39, 40, 41, 42, 43];
const TIMES = ['0:50', '0:52', '0:54', '0:56', '0:58', '1:00', '1:02', '1:04', '1:06', '1:08', '1:10', '1:12'];

const ArrangementView = () => (
  <Arrangement>
    <Overview>
      <svg viewBox="321 0 936 10" preserveAspectRatio="none">
        {OVERVIEW_LINES.map(([x1, x2, y, h, fill], i) => (
          <rect key={i} x={x1} y={y} width={x2 - x1} height={h} fill={fill} />
        ))}
        <path d="M525.5 0v10" stroke="#ddd" />
      </svg>
      <OverviewFrame />
    </Overview>
    <WithSide>
      <Ruler $h={14}>
        {BARS.map((bar) => <RulerLabel key={bar} $left={barPos(bar)}>{bar}</RulerLabel>)}
      </Ruler>
    </WithSide>
    <WithSide>
      <ScrubLane>
        <LoopBrace $left={barPos(33)} $width={barWidth(8)}>
          <svg width="5" height="5"><path d="M0 .5l4 2-4 2" stroke="#aaa" fill="none" /></svg>
          <svg width="5" height="5"><path d="M5 .5l-4 2 4 2" stroke="#aaa" fill="none" /></svg>
        </LoopBrace>
        <VLine $left={barPos(33)} $bottom={-4} />
        <VLine $left={barPos(41)} $bottom={-4} />
        <InsertMark $left={barPos(30.69)} />
      </ScrubLane>
      <SetPanel>
        <span><SetButton>Set</SetButton></span>
        <TinyButton $round aria-label="Previous locator">
          <svg width="5" height="5"><path d="M5 2.5H1M2.5.5l-2 2 2 2" stroke="#ccc" fill="none" /></svg>
        </TinyButton>
        <TinyButton $round aria-label="Next locator">
          <svg width="5" height="5"><path d="M0 2.5h4M2.5.5l2 2-2 2" stroke="#ccc" fill="none" /></svg>
        </TinyButton>
        <i />
        <TinyButton aria-label="Automation mode">
          <svg width="6" height="6"><path d="M1 5l4-4" stroke="#eee" /><path d="M0 6V4l2 2zM6 0v2L4 0z" fill="#eee" /></svg>
        </TinyButton>
        <TinyButton aria-label="Lock envelopes">
          <svg width="6" height="6"><path d="M.5 3h5v3h-5z" fill="#eee" /><path d="M1.5 3V1.5a1.5 1 0 0 1 3 0V3" stroke="#eee" fill="none" /></svg>
        </TinyButton>
      </SetPanel>
    </WithSide>
    <Tracks>
      {TRACKS.map((track, i) => <Track key={i} track={track} />)}
      <MasterTrack />
      <Overlay>
        <VLine $left={barPos(33)} />
        <VLine $left={barPos(41)} />
        <VLine $left={barPos(37.79)} $w={2} $color="rgba(200, 200, 200, 0.7)" />
        <VLine $left={barPos(30.69)} $top={263} $bottom={132} $color="#7fb4b8" />
        <Cursor $left={barPos(41.07)} width="8" height="13" viewBox="0 0 8 13">
          <path d="M.5.5v10l2.3-2 1.7 3.7 1.5-.7-1.6-3.5h3z" fill="#f4f4f4" stroke="#222" strokeWidth=".6" />
        </Cursor>
      </Overlay>
    </Tracks>
    <WithSide>
      <Ruler $h={10}>
        {TIMES.map((time, i) => (
          <RulerLabel key={time} $low $left={barPos(30.14 + i * 1.1667)}>{time}</RulerLabel>
        ))}
        <InsertMark $low $left={barPos(30.69)} />
      </Ruler>
    </WithSide>
  </Arrangement>
);

const Rail = styled.aside`
  display: flex;
  flex-direction: column;
  align-items: center;

  > button {
    margin-bottom: 2px;
  }
`;

const RailBody = styled.div`
  position: relative;
  flex: 1;
  align-self: stretch;
  display: flex;
  flex-direction: column;
  justify-content: flex-end;
  gap: 4px;
  padding: 0 0 16px 3px;
  border-radius: 0 2px 2px 0;
  background: #131313;
`;

/* ---------- device view ---------- */

const DeviceArea = styled.section`
  display: grid;
  grid-template-columns: 128px minmax(0, 1fr);
  gap: 11px;
  padding: 9px 7px 3px 8px;
`;

const InfoBox = styled.article`
  background: #424242;
  box-shadow: 0 0 0 1px #292929, 0 0 2px 2px #2d2d2d;
  overflow: hidden;

  h2 {
    margin: 0 0 1px;
    padding: 0 3px;
    font-size: 7px;
    font-weight: 500;
    line-height: 11px;
    background: #545454;
  }
  p {
    margin: 0 0 10px;
    padding-left: 3px;
    font-family: Lato, Roboto, sans-serif;
    color: #d8d8d8;
    line-height: 10px;
    white-space: pre;
  }
`;

const DeviceChain = styled.div`
  display: grid;
  grid-template-columns: 8px 320px 7px minmax(0, 1fr) 7px 62px;
  background: #2b2b2b;
  box-shadow: 0 0 0 2px #2b2b2b;
`;

const Device = styled.section`
  display: flex;
  flex-direction: column;
  min-width: 0;
  border: 1px solid #5c5c5c;
  border-radius: 3px;
  background: #464646;
`;

const DeviceHeader = styled.header`
  display: flex;
  align-items: center;
  gap: 2px;
  height: 10px;
  padding: 0 2px;
  background: #555;

  h3 {
    margin: 0 ${(props) => props.$packed ? '36px' : 'auto'} 0 1px;
    font-size: 7px;
    font-weight: 500;
  }
`;

const SideMeter = styled.div`
  display: flex;
  align-items: flex-end;
  gap: 1px;
  width: 4px;
  height: 16px;
  margin: auto;

  i {
    flex: 1;
    height: 80%;
    background: linear-gradient(#3f7c40 3px, #38d468 3px);
  }
  i + i {
    height: 100%;
  }
`;

const EqBody = styled.div`
  flex: 1;
  display: grid;
  grid-template-columns: 32px 249px minmax(0, 1fr);
  gap: 1px;
`;

const KnobLabel = styled.label`
  position: relative;
  display: flex;
  flex-direction: column;
  align-items: center;
  line-height: 8px;
  text-align: center;

  input {
    position: absolute;
    inset: 8px 4px;
    width: 24px;
    opacity: 0;
  }
`;

const arc = (r, from, to) => {
  const point = (deg) => {
    const rad = (deg * Math.PI) / 180;
    return `${(10 + r * Math.sin(rad)).toFixed(2)} ${(10 - r * Math.cos(rad)).toFixed(2)}`;
  };
  return `M${point(from)}A${r} ${r} 0 ${to - from > 180 ? 1 : 0} 1 ${point(to)}`;
};

const Knob = ({ name, hideName, value, text, color = '#6fb8d4', dim, width = 1.4 }) => {
  const angle = -140 + value * 280;
  return (
    <KnobLabel>
      {!hideName && name}
      <svg width="20" height="18" viewBox="0 0 20 18" fill="none">
        <path d={arc(7.5, -140, 140)} stroke={dim ? '#363636' : '#242424'} strokeWidth={width} />
        {value > 0.01 && !dim && <path d={arc(7.5, -140, angle)} stroke={color} strokeWidth={width} />}
        <path
          d="M10 10V3.5"
          transform={`rotate(${angle} 10 10)`}
          stroke={dim ? '#333' : '#181818'}
          strokeWidth={width}
        />
      </svg>
      <input type="range" aria-label={name} min="0" max="1" step="0.01" defaultValue={value} />
      <output>{text}</output>
    </KnobLabel>
  );
};

const KnobColumn = styled.div`
  display: flex;
  flex-direction: column;
  justify-content: space-between;
  padding: 1px 0 2px;
  background: #404040;
`;

const EqMiddle = styled.div`
  display: flex;
  flex-direction: column;
  gap: 2px;
`;

const BandRow = styled.div`
  flex: 1;
  display: grid;
  grid-template-columns: repeat(8, 1fr);
  gap: 1px;
`;

const Band = styled.div`
  display: flex;
  flex-direction: column;
  align-items: center;
  padding-top: 1px;
  background: ${(props) => props.$active ? '#5c5c5c' : '#404040'};

  label {
    display: flex;
    align-items: center;
    gap: 6px;
    line-height: 10px;
  }
  input {
    appearance: none;
    width: 7px;
    height: 7px;
    border: 1px solid #2c2c2c;
    background: ${(props) => props.$active ? '#9a9a9a' : '#4c4c4c'};
  }
`;

const BandType = styled.button`
  display: flex;
  align-items: center;
  justify-content: space-between;
  width: 25px;
  height: 10px;
  padding: 0 2px;
  border: 1px solid #2e2e2e;
  background: ${(props) => props.$active ? '#666' : '#3a3a3a'};
`;

const EqSide = styled.div`
  display: flex;
  flex-direction: column;
  justify-content: space-between;
  padding: 4px 2px;
`;

const SideGroup = styled.label`
  display: block;
  line-height: 9px;
  white-space: nowrap;

  > button {
    width: 100%;
  }
`;

const Pair = styled.div`
  display: grid;
  grid-template-columns: 1fr 1fr;
  gap: 3px;
`;

const BELL = 'M0 3.5h2.5M9.5 3.5H12M6 1C3.5 1 3 3.5 3 3.5S3.5 6 6 6s3-2.5 3-2.5S8.5 1 6 1';
const BAND_SHAPES = [
  'M1 6V3q0-1.5 1.5-1.5H8V6M5 6V4.5h2',
  'M0 6q0-4.5 3-4.5h8',
  BELL,
  BELL,
  BELL,
  'M0 3.5h4M12 1H9Q5 1 4 3.5 5 6 9 6h3',
  'M0 1.5h7q3 0 3 4.5',
  'M1 1.5V4h2V2.5M3 2.5q0-1 1.5-1h4q1.5 0 1.5 1.5v3H8',
];

const FREQS = [20, 30, 40, 50, 60, 70, 80, 90, 100, 200, 300, 400, 500, 600, 700, 800, 900, 1000,
  2000, 3000, 4000, 5000, 6000, 7000, 8000, 9000, 10000, 20000];
const freqX = (f) => 74.5 + 74.4 * Math.log10(f / 100);

const GraphText = styled.text`
  fill: #9a9a9a;
  font-size: 7px;
  text-anchor: ${(props) => props.$anchor};
`;

const EqGraph = () => (
  <svg width="249" height="89" viewBox="0 0 249 89">
    <rect width="249" height="89" fill="#1d1d1d" />
    {FREQS.map((f) => (
      <path
        key={f}
        d={`M${Math.round(freqX(f)) + 0.5} 0v89`}
        stroke={[100, 1000, 10000].includes(f) ? '#4c4c4c' : '#2e2e2e'}
      />
    ))}
    {[9.5, 27.5, 44.5, 62.5, 80.5].map((y) => <path key={y} d={`M15 ${y}h234`} stroke="#303030" />)}
    {[['12', 9], ['6', 27], ['0', 45], ['-6', 63], ['-12', 81]].map(([label, y]) => (
      <GraphText key={label} x="12" y={y + 2} $anchor="end">{label}</GraphText>
    ))}
    {[['100', 74], ['1k', 149], ['10k', 223]].map(([label, x]) => (
      <GraphText key={label} x={x} y="88" $anchor="middle">{label}</GraphText>
    ))}
    <path d="M79 89L94 62C101 52 107 44 123 43.5c12-.5 20 1 40 1h86" stroke="#a8a8a8" strokeWidth="1.2" fill="none" />
  </svg>
);

const EqEight = () => (
  <Device>
    <DeviceHeader>
      <RoundButton $size={9} $bg="#3a3a3a" aria-label="EQ Eight activator" />
      <RoundButton $size={9} $bg="#2a2a2a" aria-label="Unfold">
        <svg width="5" height="5"><path d="M0 0l5 2.5L0 5z" fill="#e0e0e0" /></svg>
      </RoundButton>
      <h3>EQ Eight</h3>
      <SwapIcon />
      <SaveIcon />
    </DeviceHeader>
    <EqBody>
      <KnobColumn>
        <Knob name="Freq" value={0.4} text="271 Hz" color="#808080" />
        <Knob name="Gain" value={0.5} text="0.00 dB" dim />
        <Knob name="Q" value={0.4} text="0.82" color="#808080" />
      </KnobColumn>
      <EqMiddle>
        <EqGraph />
        <BandRow>
          {BAND_SHAPES.map((shape, i) => (
            <Band key={i} $active={i === 1}>
              <BandType $active={i === 1} aria-label={`Band ${i + 1} type`}>
                <svg width="12" height="7"><path d={shape} stroke="#c4c4c4" fill="none" /></svg>
                <svg width="5" height="4"><path d="M0 0h5L2.5 4z" fill="#c4c4c4" /></svg>
              </BandType>
              <label><input type="checkbox" defaultChecked={i === 1} />{i + 1}</label>
            </Band>
          ))}
        </BandRow>
      </EqMiddle>
      <EqSide>
        <Pair>
          <MixButton aria-label="Headphones"><svg width="7" height="6"><path d="M1.5 5V3a2 2 0 0 1 4 0v2M1 3.5v1.5M6 3.5v1.5" stroke="#909090" fill="none" /></svg></MixButton>
          <MixButton aria-label="Analyzer"><svg width="8" height="6"><path d="M.5 6V3M2.5 6V1M4.5 6V2.5M6.5 6V1" stroke="#b0b0b0" /></svg></MixButton>
        </Pair>
        <SideGroup>Mode<Select label="Mode" value="Stereo" /></SideGroup>
        <SideGroup>Edit<MixButton $dim>A</MixButton></SideGroup>
        <SideGroup>Adapt. Q<MixButton $dim>Off</MixButton></SideGroup>
        <SideGroup>Scale<Field defaultValue="100 %" $bg="#333" /></SideGroup>
        <SideGroup>Gain<Field defaultValue="0.00 dB" $bg="#333" /></SideGroup>
      </EqSide>
    </EqBody>
  </Device>
);

const RackBody = styled.div`
  flex: 1;
  display: grid;
  grid-template-columns: 12px 138px 167px minmax(0, 1fr) 40px 10px;
  gap: 2px;
`;

const RackToggles = styled.div`
  display: flex;
  flex-direction: column;
  align-items: center;
  gap: 2px;
  padding-top: 2px;
`;

const MacroGrid = styled.div`
  display: grid;
  grid-template-columns: repeat(4, 1fr);
  grid-template-rows: 1fr 1fr;
  gap: 2px;
  padding: 2px 0;
`;

const Macro = styled.div`
  min-width: 0;
  overflow: hidden;
  border-radius: 3px;
  border: 1px solid #323232;
  background: #424242;
  text-align: center;

  h4 {
    height: 19px;
    margin: 0 0 3px;
    padding: 1px 0 0;
    font-size: 7px;
    font-weight: 500;
    line-height: 8px;
    white-space: pre-line;
    background: #555;
  }
`;

const MACROS = [
  ['Chain\nSelector', 0.645, '82'], ['Resonanc\ne', 0.6, '77 %'], ['Filter\nCircuit -', 0, '0'], ['Macro 4', 0, '0', true],
  ['Macro 5', 0, '0', true], ['Macro 6', 0, '0', true], ['Macro 7', 0, '0', true], ['Macro 8', 0, '0', true],
];

const ChainPanel = styled.div`
  display: flex;
  flex-direction: column;
`;

const ChainTools = styled.div`
  display: flex;
  align-items: center;
  gap: 3px;
  height: 20px;
  padding: 4px 6px 0 4px;
`;

const ToolButton = styled(MixButton)`
  width: ${(props) => props.$w}px;
  height: ${(props) => props.$slim ? 8 : 9}px;
  margin-left: ${(props) => props.$push ? 'auto' : 0};
`;

const ChainList = styled.div`
  flex: 1;
  display: grid;
  grid-template-rows: repeat(7, 1fr);
  position: relative;
  margin-bottom: 3px;
  padding-left: 12px;
  background: #3a3a3a;

  &::before {
    content: '';
    position: absolute;
    left: 4px;
    top: 30%;
    bottom: 12%;
    width: 4px;
    border-radius: 2px;
    background: #505050;
  }
`;

const ChainRow = styled.div`
  display: grid;
  grid-template-columns: 51px 4px 25px 26px 10px 10px 10px 5px;
  gap: 2px;
  align-items: center;
  border-bottom: 1px solid #222;
  background: #66767c;

  > b {
    align-self: stretch;
    display: flex;
    align-items: center;
    padding-left: 2px;
    font-weight: 500;
    background: #1ae8ff;
    color: #0c4c58;
  }
`;

const ZonePanel = styled.div`
  display: flex;
  flex-direction: column;
  padding: 0 2px 0 3px;
`;

const ZoneRuler = styled.div`
  position: relative;
  height: 20px;
`;

const ZoneLabel = styled.span`
  position: absolute;
  left: ${(props) => props.$left}%;
  top: 7px;
  width: 20px;
  margin-left: -10px;
  text-align: center;
`;

const ZoneMarker = styled.i`
  position: absolute;
  left: 64.1%;
  top: 2px;
  bottom: 0;
  width: 3px;
  background: linear-gradient(#8fd8ea 2px, #1c8c50 2px, #1c8c50 5px, #8fd8ea 5px);
`;

const ZoneGrid = styled.div`
  flex: 1;
  display: grid;
  grid-template-rows: repeat(7, 1fr);
  position: relative;
  margin-bottom: 3px;
  background: repeating-linear-gradient(90deg, #424242 0 2px, #585858 2px 6.3%);
`;

const ZoneRow = styled.div`
  position: relative;
  border-bottom: 1px solid #3a3a3a;
`;

const Zone = styled.div`
  position: absolute;
  left: ${(props) => props.$left}%;
  width: 10.24%;
  top: 2px;
  bottom: 1px;
  border: 1px solid #1c1c1c;
  background: linear-gradient(${(props) => props.$fade ? '#98a4a4' : '#f0f0e8'} 1px, #222 1px, #222 2px, #5478c4 2px);
`;

const RackNote = styled.div`
  display: flex;
  align-items: center;
  justify-content: center;
  text-align: center;
  white-space: pre-line;
  border: solid #303030;
  border-width: 0 1px;
  margin-top: -10px;
  background: #464646;
`;

const DropZone = styled(DropHint)`
  background: #424242;
  white-space: pre-line;
`;

const RACK_TOGGLES = [
  ['Macro controls', 'M2.5 6A2.5 2.5 0 1 1 6.5 6M4.5 4.5L6 3'],
  ['Chain list', 'M2.5 3h4M2.5 4.5h4M2.5 6h4'],
  ['Device view', 'M2 3.5h5v2H2z'],
];

const AudioRack = () => (
  <Device>
    <DeviceHeader $packed>
      <RoundButton $size={8} $bg={ORANGE} aria-label="Rack activator" />
      <h3>Audio Effect Rack</h3>
      <ToolButton $slim $w={21}>Map</ToolButton>
      <SwapIcon />
      <SaveIcon />
    </DeviceHeader>
    <RackBody>
      <RackToggles>
        {RACK_TOGGLES.map(([label, d]) => (
          <RoundButton key={label} $size={9} $bg={ORANGE} aria-label={label}>
            <svg width="9" height="9"><path d={d} stroke="#5a4010" fill="none" strokeWidth=".8" /></svg>
          </RoundButton>
        ))}
      </RackToggles>
      <MacroGrid>
        {MACROS.map(([name, value, text, dim]) => (
          <Macro key={name}>
            <h4>{name}</h4>
            <Knob name={name} hideName value={value} text={text} dim={dim} />
          </Macro>
        ))}
      </MacroGrid>
      <ChainPanel>
        <ChainTools>
          <ToolButton $w={11} aria-label="Auto select">
            <svg width="7" height="5"><path d="M0 2.5h2M3 .5l3 2-3 2z" stroke="#222" fill="#222" /></svg>
          </ToolButton>
          <ToolButton $w={19} $on $push>Chain</ToolButton>
          <ToolButton $w={19}>Hide</ToolButton>
        </ChainTools>
        <ChainList>
          {[0, 1, 2, 3, 4, 5, 6].map((n) => (
            <ChainRow key={n}>
              <b>Chain</b>
              <Meter level={n === 3 ? 0.6 : 0} color="#58b878" />
              <Field aria-label={`Chain ${n + 1} volume`} defaultValue="0.0 dB" $fill={100} />
              <Field aria-label={`Chain ${n + 1} pan`} defaultValue="C" $bg="#303030" />
              <MixButton $on aria-label={`Chain ${n + 1} activator`}>
                <svg width="6" height="6"><path d="M0 2h1.5L4 0v6L1.5 4H0zM5.5 1.5v3" stroke="#4a3406" strokeWidth=".8" fill="none" /></svg>
              </MixButton>
              <MixButton>S</MixButton>
              <SwapIcon />
              <Meter level={n === 3 ? 0.8 : 0} />
            </ChainRow>
          ))}
        </ChainList>
      </ChainPanel>
      <ZonePanel>
        <ZoneRuler>
          {[0, 8, 16, 24, 32, 40, 48, 56, 64, 72, 80, 88, 96, 104, 112, 120].map((n) => (
            <ZoneLabel key={n} $left={(n / 127) * 100}>{n}</ZoneLabel>
          ))}
          <ZoneLabel $left={98.8}>127</ZoneLabel>
          <ZoneMarker />
        </ZoneRuler>
        <ZoneGrid>
          {[0, 1, 2, 3, 4, 5, 6].map((n) => (
            <ZoneRow key={n}><Zone $left={28.5 + n * 10.24} $fade={n === 1 || n === 4} /></ZoneRow>
          ))}
        </ZoneGrid>
      </ZonePanel>
      <RackNote>{'10 of 10\nChains\nSelected'}</RackNote>
      <i />
    </RackBody>
  </Device>
);

/* ---------- status bar ---------- */

const StatusBar = styled.footer`
  display: grid;
  grid-template-columns: 14px minmax(0, 1fr) 135px 120px 14px;
  align-items: center;
  gap: 6px;
  padding: 0 5px;
`;

const StatusText = styled.div`
  height: 13px;
  padding-left: 5px;
  line-height: 12px;
  background: #424242;
  box-shadow: 0 0 0 1px #292929;
`;

const ChainOverview = styled.div`
  display: flex;
  align-items: center;
  justify-content: space-between;
  height: 17px;
  padding: 0 1px 0 3px;
  background: #2e2e2e;
`;

const StatusTriangle = () => (
  <svg width="7" height="6"><path d="M3.5 0L7 6H0z" fill="none" stroke="#4a4a4a" /></svg>
);

const App = () => (
  <>
    <GlobalStyle />
    <Page>
      <Transport />
      <Main>
        <LeftColumn>
          <Browser />
          <GroovePool />
        </LeftColumn>
        <ArrangementView />
        <Rail>
          <RoundButton $size={13} aria-label="Arrangement view">
            <svg width="8" height="8"><path d="M0 1h8M0 4h8M0 7h8" stroke={ORANGE} strokeWidth="2" /></svg>
          </RoundButton>
          <RoundButton $size={13} aria-label="Session view">
            <svg width="8" height="8"><path d="M1 0v8M4 0v8M7 0v8" stroke="#505050" /></svg>
          </RoundButton>
          <RailBody>
            <Thumb $right={7} $top={10} $size={56} />
            {['IO', 'R', 'M', 'D'].map((text) => (
              <RoundButton key={text} $size={9} $bg={ORANGE} $fg="#3a2a08">{text}</RoundButton>
            ))}
          </RailBody>
        </Rail>
      </Main>
      <DeviceArea>
        <InfoBox>
          <h2>Audio Clip</h2>
          <p>
            {'A clip representing a piece of audio. Click\nto select the clip and drag it to a new\nposition. Change clip length by dragging\nthe edges. Selected clips can be edited\nwith any available Edit menu commands.\nClip properties can be edited in the Clip\nView, which will open when the clip is\ndouble-clicked.'}
          </p>
          <p>{'[Shift + Drag Edges] Stretch Clip\n[Shift + Ctrl + Drag] Slide Waveform'}</p>
        </InfoBox>
        <DeviceChain>
          <SideMeter><i /><i /></SideMeter>
          <EqEight />
          <SideMeter><i /><i /></SideMeter>
          <AudioRack />
          <SideMeter><i /><i /></SideMeter>
          <DropZone>{'Drop Audio\nEffects Here'}</DropZone>
        </DeviceChain>
      </DeviceArea>
      <StatusBar>
        <RoundButton $size={13} $bg="#2c2c2c" aria-label="Info view"><StatusTriangle /></RoundButton>
        <StatusText>Insert Mark 30.3.3 (Time: 0:50:857)</StatusText>
        <StatusText />
        <ChainOverview>
          E-Filter
          <svg width="90" height="12">
            <path d="M.5.5h89v11H.5z" fill="#303030" stroke="#0c0c0c" />
            <path d="M3 2h22v8H3z" fill="#1a1a1a" />
            <path d="M28 1v10" stroke="#0c0c0c" />
            <path d="M30 4.5h10M30 7h10M56 3h32M56 5h32M56 7h32M56 9h32" stroke="#505050" />
            <path d="M43 2h5v8h-5zM50 2h2v8h-2zM53 2h2v8h-2z" fill="#a8d0d8" />
          </svg>
        </ChainOverview>
        <RoundButton $size={13} $bg="#2c2c2c" aria-label="Device view"><StatusTriangle /></RoundButton>
      </StatusBar>
    </Page>
  </>
);

export default App;
